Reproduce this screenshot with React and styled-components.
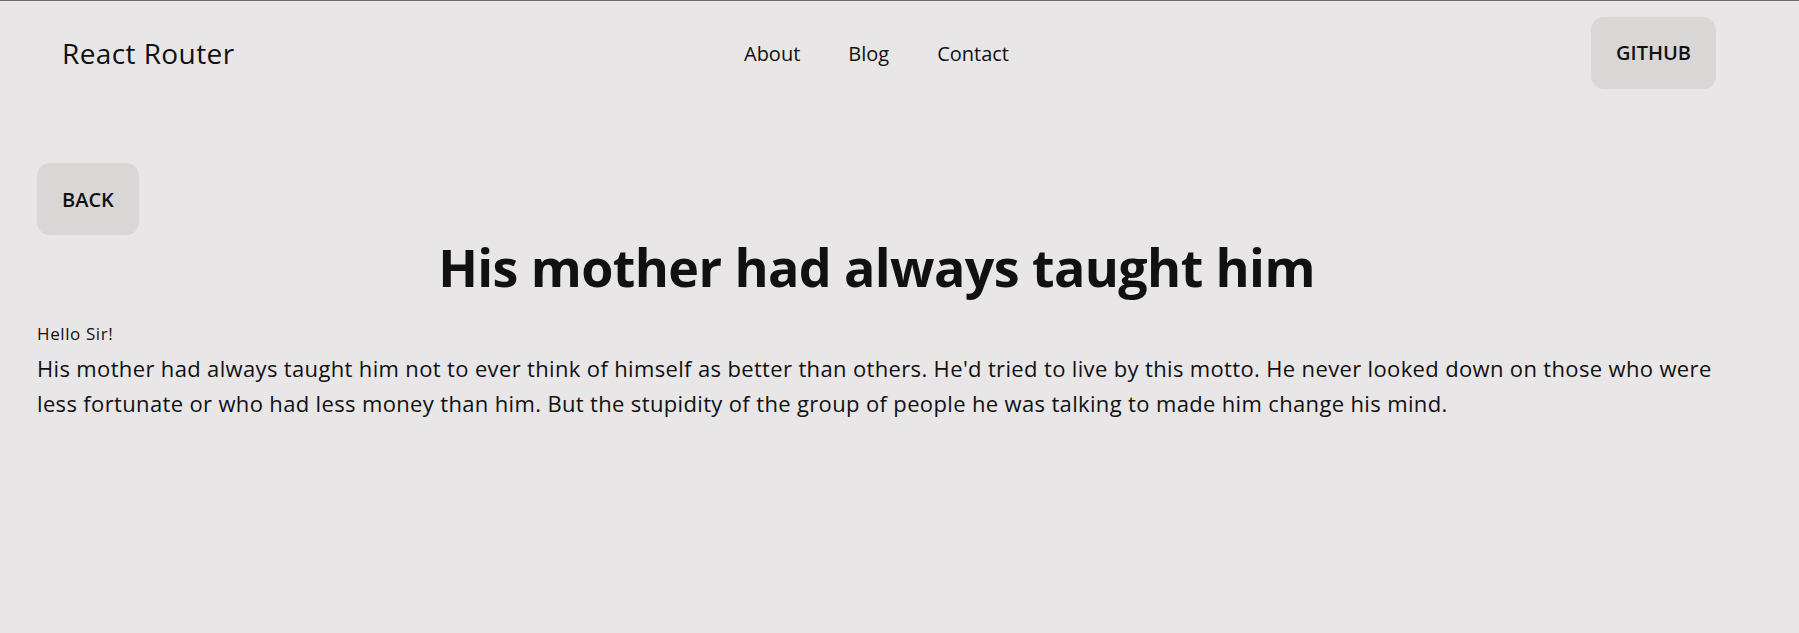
import React from 'react'
import styled, { createGlobalStyle } from 'styled-components'

const GlobalStyle = createGlobalStyle`
    *{
        box-sizing: border-box;
    }
    body{
        margin: 0;
        background: #e8e6e7;
        color: #111;
        font-family: "Open Sans", Lato, sans-serif;
        border-top: 1px solid #6b6b6b;
        min-height: 100vh;
    }
`;

const Button = styled.button`
    background: #d8d7d5;
    border: none;
    border-radius: 13px;
    padding: 0 25px;
    height: 72px;
    font-family: inherit;
    font-size: 20px;
    font-weight: 600;
    color: #111;
    text-transform: uppercase;
    cursor: pointer;
`;

function App() {
    return (
        <PageStyled>
            <GlobalStyle />
            <header className="nav">
                <div className="logo">React Router</div>
                <nav>
                    <a href="#about">About</a>
                    <a href="#blog">Blog</a>
                    <a href="#contact">Contact</a>
                </nav>
                <div className="right">
                    <Button>Github</Button>
                </div>
            </header>
            <main>
                <Button>Back</Button>
                <h1>His mother had always taught him</h1>
                <small>Hello Sir!</small>
                <p>
                    His mother had always taught him not to ever think of himself as better than others. He'd tried to live by this motto. He never looked down on those who were less fortunate or who had less money than him. But the stupidity of the group of people he was talking to made him change his mind.
                </p>
            </main>
        </PageStyled>
    )
}

const PageStyled = styled.div`
    padding: 0 83px 0 37px;

    .nav{
        display: grid;
        grid-template-columns: 1fr auto 1fr;
        align-items: center;
        padding: 15px 0 0;
        height: 88px;
        .logo{
            padding-left: 25px;
            font-size: 28px;
            font-weight: 500;
            letter-spacing: 0.4px;
        }
        nav{
            display: flex;
            gap: 48px;
            padding-top: 2px;
            a{
                color: #111;
                text-decoration: none;
                font-size: 20px;
            }
        }
        .right{
            display: flex;
            justify-content: flex-end;
        }
    }

    main{
        padding-top: 74px;
        h1{
            margin: 0;
            padding-top: 1px;
            text-align: center;
            font-size: 52px;
            font-weight: 700;
            line-height: 1.2;
            letter-spacing: -0.6px;
        }
        small{
            display: block;
            margin-top: 24px;
            font-size: 17px;
            letter-spacing: 0.6px;
        }
        p{
            margin: 6px 0 0;
            font-size: 22px;
            line-height: 35px;
            letter-spacing: 0.35px;
        }
    }
`;

export default App;
